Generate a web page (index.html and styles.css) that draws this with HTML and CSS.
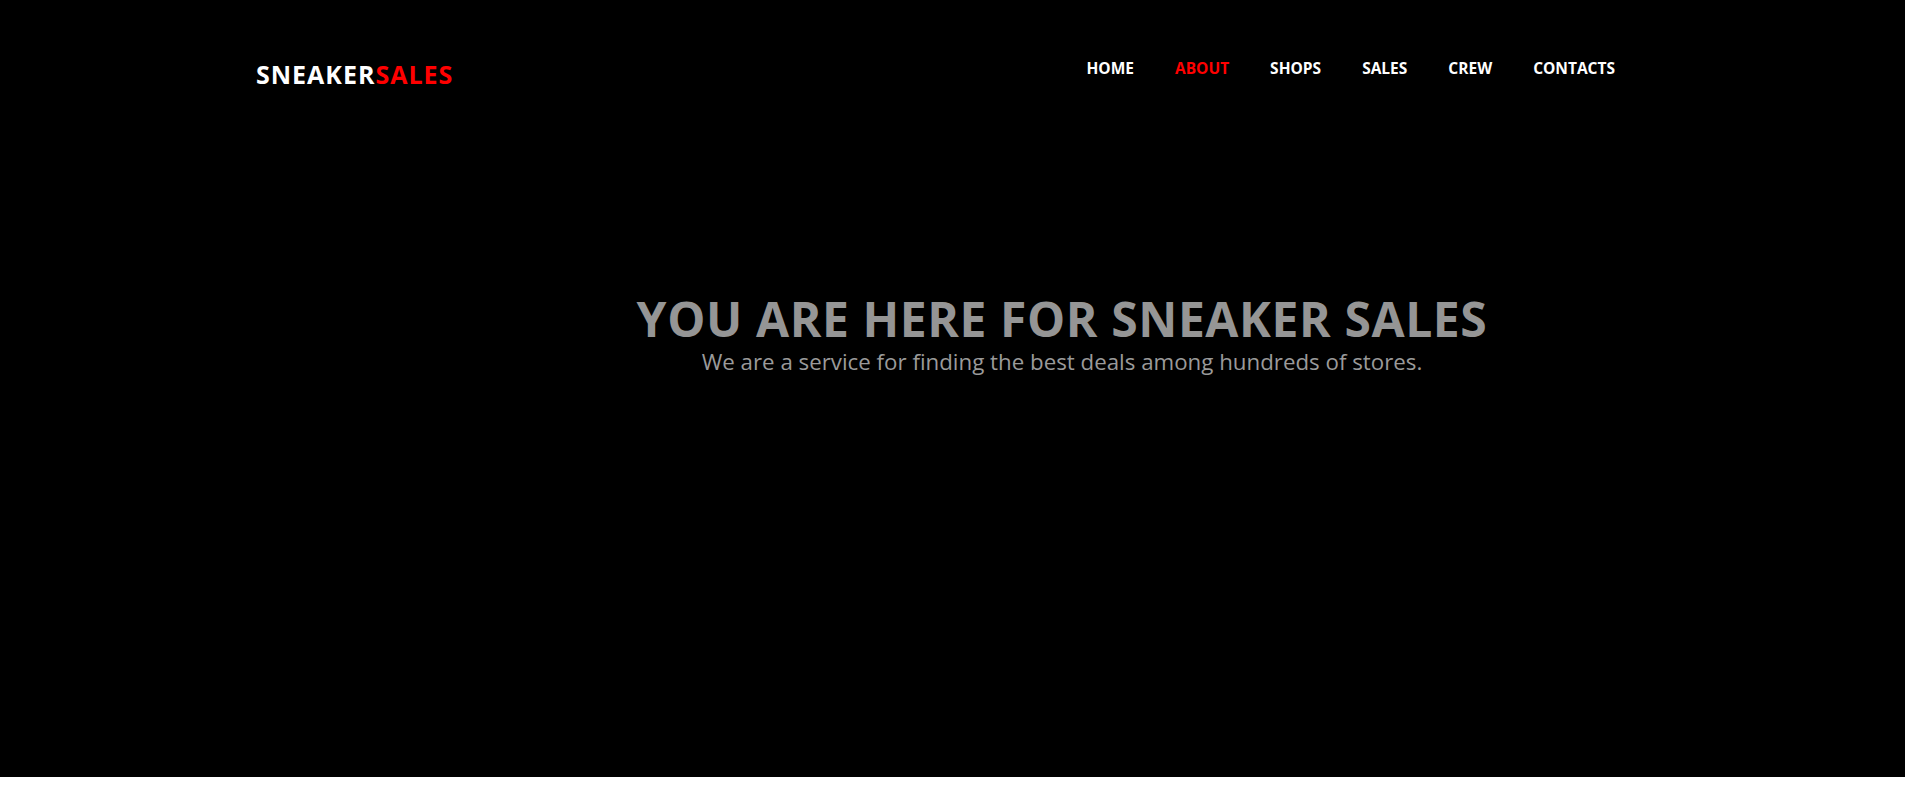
FILE: index.html
```html
<!DOCTYPE html>
<html lang="en">
<head>
<meta charset="utf-8">
<title>SneakerSales</title>
<link rel="stylesheet" href="styles.css">
</head>
<body>
<section class="hero">
  <header class="topbar">
    <a class="logo" href="#"><span class="logo-white">SNEAKER</span><span class="logo-red">SALES</span></a>
    <nav class="menu">
      <a class="menu-item" href="#">HOME</a>
      <a class="menu-item active" href="#">ABOUT</a>
      <a class="menu-item" href="#">SHOPS</a>
      <a class="menu-item" href="#">SALES</a>
      <a class="menu-item" href="#">CREW</a>
      <a class="menu-item" href="#">CONTACTS</a>
    </nav>
  </header>
  <div class="hero-text">
    <h1 class="hero-title">YOU ARE HERE FOR SNEAKER SALES</h1>
    <p class="hero-sub">We are a service for finding the best deals among hundreds of stores.</p>
  </div>
</section>
</body>
</html>
```

FILE: styles.css
```css
html, body {
  margin: 0;
  padding: 0;
  background: #ffffff;
}
body {
  font-family: "Open Sans", "Liberation Sans", sans-serif;
}
.hero {
  background: #000000;
  height: 777px;
  display: flex;
  flex-direction: column;
}
.topbar {
  display: flex;
  justify-content: space-between;
  align-items: flex-start;
  padding: 57px 290px 0 256px;
}
.logo {
  font-size: 25px;
  font-weight: 700;
  letter-spacing: 1px;
  text-decoration: none;
  line-height: normal;
}
.logo-white { color: #ffffff; }
.logo-red { color: #ff0000; }
.menu {
  display: flex;
  gap: 41px;
}
.menu-item {
  color: #ffffff;
  font-size: 15.5px;
  font-weight: 700;
  text-decoration: none;
  line-height: normal;
}
.menu-item.active {
  color: #ff0000;
}
.hero-text {
  margin-top: 202px;
  padding-left: 219px;
  text-align: center;
}
.hero-title {
  margin: 0;
  font-size: 48px;
  font-weight: 700;
  color: #959595;
  line-height: 52px;
  letter-spacing: 0.6px;
}
.hero-sub {
  margin: 4px 0 0;
  font-size: 22.3px;
  font-weight: 400;
  color: #9a9a9a;
  line-height: 26px;
}
```
